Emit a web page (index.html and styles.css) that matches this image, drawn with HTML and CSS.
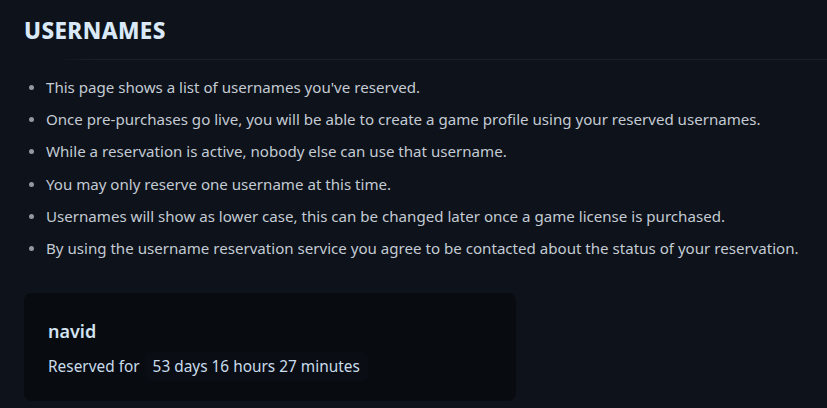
FILE: index.html
```html
<!DOCTYPE html>
<html lang="en">
<head>
<meta charset="utf-8">
<title>Usernames</title>
<link rel="stylesheet" href="styles.css">
</head>
<body>
<main class="page">
  <header class="page-header">
    <h1 class="title">USERNAMES</h1>
  </header>
  <hr class="divider">
  <ul class="info-list">
    <li>This page shows a list of usernames you've reserved.</li>
    <li>Once pre-purchases go live, you will be able to create a game profile using your reserved usernames.</li>
    <li>While a reservation is active, nobody else can use that username.</li>
    <li>You may only reserve one username at this time.</li>
    <li>Usernames will show as lower case, this can be changed later once a game license is purchased.</li>
    <li>By using the username reservation service you agree to be contacted about the status of your reservation.</li>
  </ul>
  <section class="card">
    <div class="card-name">navid</div>
    <div class="card-row">
      <span class="card-label">Reserved for</span>
      <span class="card-time">53 days 16 hours 27 minutes</span>
    </div>
  </section>
</main>
</body>
</html>
```

FILE: styles.css
```css
html, body {
  margin: 0;
  padding: 0;
  background: #0e121a;
  height: 100%;
  overflow: hidden;
}
body {
  font-family: "Noto Sans", "Open Sans", sans-serif;
  color: #c3cbd4;
}
.page {
  padding: 16px 0 0 24px;
}
.page-header {
  display: flex;
}
.title {
  margin: 0;
  font-size: 22.5px;
  line-height: 30px;
  font-weight: 800;
  letter-spacing: 0.4px;
  color: #d9e9f7;
}
.divider {
  border: 0;
  height: 1px;
  margin: 13px 0 0 31px;
  background: linear-gradient(to right, rgba(30,36,45,0), #1b2029 40px, #1b2029);
}
.info-list {
  margin: 11px 0 0;
  padding: 0 0 0 22px;
  list-style: none;
}
.info-list li {
  position: relative;
  font-size: 15.1px;
  line-height: 32.2px;
  color: #c3cbd4;
}
.info-list li::before {
  content: "";
  position: absolute;
  left: -17px;
  top: 14px;
  width: 5px;
  height: 5px;
  border-radius: 50%;
  background: #8f98a3;
}
.card {
  margin-top: 29px;
  width: 445px;
  padding: 26px 23px 20px 24px;
  background: #080b10;
  border-radius: 8px;
}
.card-name {
  font-size: 18px;
  line-height: 24px;
  font-weight: 600;
  color: #d2e3f2;
}
.card-row {
  display: flex;
  align-items: center;
  gap: 5px;
  margin-top: 9px;
  font-size: 15.4px;
}
.card-label {
  color: #c9dcec;
}
.card-time {
  padding: 4px 8px;
  border-radius: 6px;
  background: #0a0e14;
  color: #c9dcec;
}
```
